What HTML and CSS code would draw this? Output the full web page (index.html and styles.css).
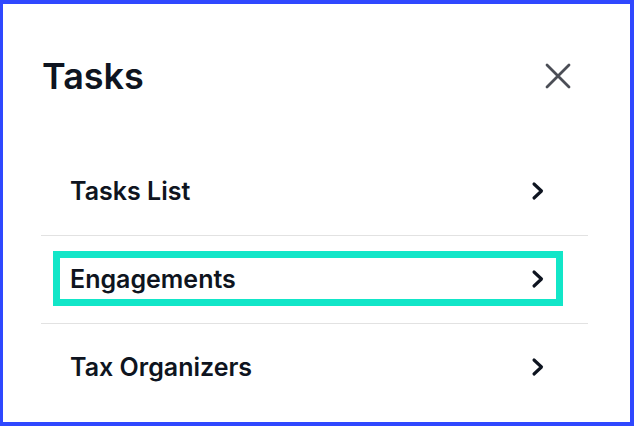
FILE: index.html
```html
<!DOCTYPE html>
<html lang="en">
<head>
  <meta charset="UTF-8" />
  <meta name="viewport" content="width=device-width, initial-scale=1.0"/>
  <title>Tasks</title>
  <link rel="stylesheet" href="styles.css">
</head>
<body>
  <div class="panel">
    <div class="panel-header">
      <h2>Tasks</h2>
      <button class="close" aria-label="Close">
        <svg width="28" height="28" viewBox="0 0 28 28">
          <path d="M3 3 L25 25 M25 3 L3 25" stroke="#4b4e56" stroke-width="2.8" stroke-linecap="round" fill="none"/>
        </svg>
      </button>
    </div>

    <ul class="menu">
      <li class="menu-item">
        <a class="menu-link" href="#">Tasks List
          <svg class="chevron" width="14" height="20" viewBox="0 0 14 20"><path d="M3 3 L10.5 10 L3 17" /></svg>
        </a>
      </li>
      <li class="menu-item">
        <a class="menu-link is-focused" href="#">Engagements
          <svg class="chevron" width="14" height="20" viewBox="0 0 14 20"><path d="M3 3 L10.5 10 L3 17" /></svg>
        </a>
      </li>
      <li class="menu-item">
        <a class="menu-link" href="#">Tax Organizers
          <svg class="chevron" width="14" height="20" viewBox="0 0 14 20"><path d="M3 3 L10.5 10 L3 17" /></svg>
        </a>
      </li>
    </ul>
  </div>
</body>
</html>
```

FILE: styles.css
```css
html, body {
  margin: 0;
  padding: 0;
  background: white;
}
.panel {
  width: 634px;
  height: 426px;
  box-sizing: border-box;
  border: 4px solid #2f48ff;
  border-left-width: 3px;
  padding: 50px 42px 0 38px;
  font-family: Inter, "Noto Sans", sans-serif;
  color: #0e1420;
}
.panel-header {
  display: flex;
  justify-content: space-between;
  align-items: center;
  height: 44px;
  padding-left: 1px;
}
.panel-header h2 {
  margin: 0;
  font-size: 36px;
  line-height: 44px;
  font-weight: 600;
}
.close {
  width: 32px;
  height: 32px;
  margin-right: 14px;
  padding: 0;
  border: none;
  background: none;
  display: flex;
  align-items: center;
  justify-content: center;
  cursor: pointer;
}
.menu {
  list-style: none;
  margin: 50px 0 0;
  padding: 0;
}
.menu-item {
  height: 72px;
  padding-top: 15px;
  border-bottom: 1px solid #e2e2e2;
}
.menu-item:last-child {
  border-bottom: none;
}
.menu-link {
  display: flex;
  justify-content: space-between;
  align-items: center;
  height: 41px;
  margin: 0 25px 0 12px;
  padding: 0 11px 0 10px;
  border: 7px solid transparent;
  font-size: 25px;
  font-weight: 600;
  color: #0e1420;
  text-decoration: none;
}
.menu-link.is-focused {
  border-color: #12e6c8;
}
.chevron path {
  fill: none;
  stroke: #0e1420;
  stroke-width: 3.1;
  stroke-linecap: round;
  stroke-linejoin: round;
}
```
